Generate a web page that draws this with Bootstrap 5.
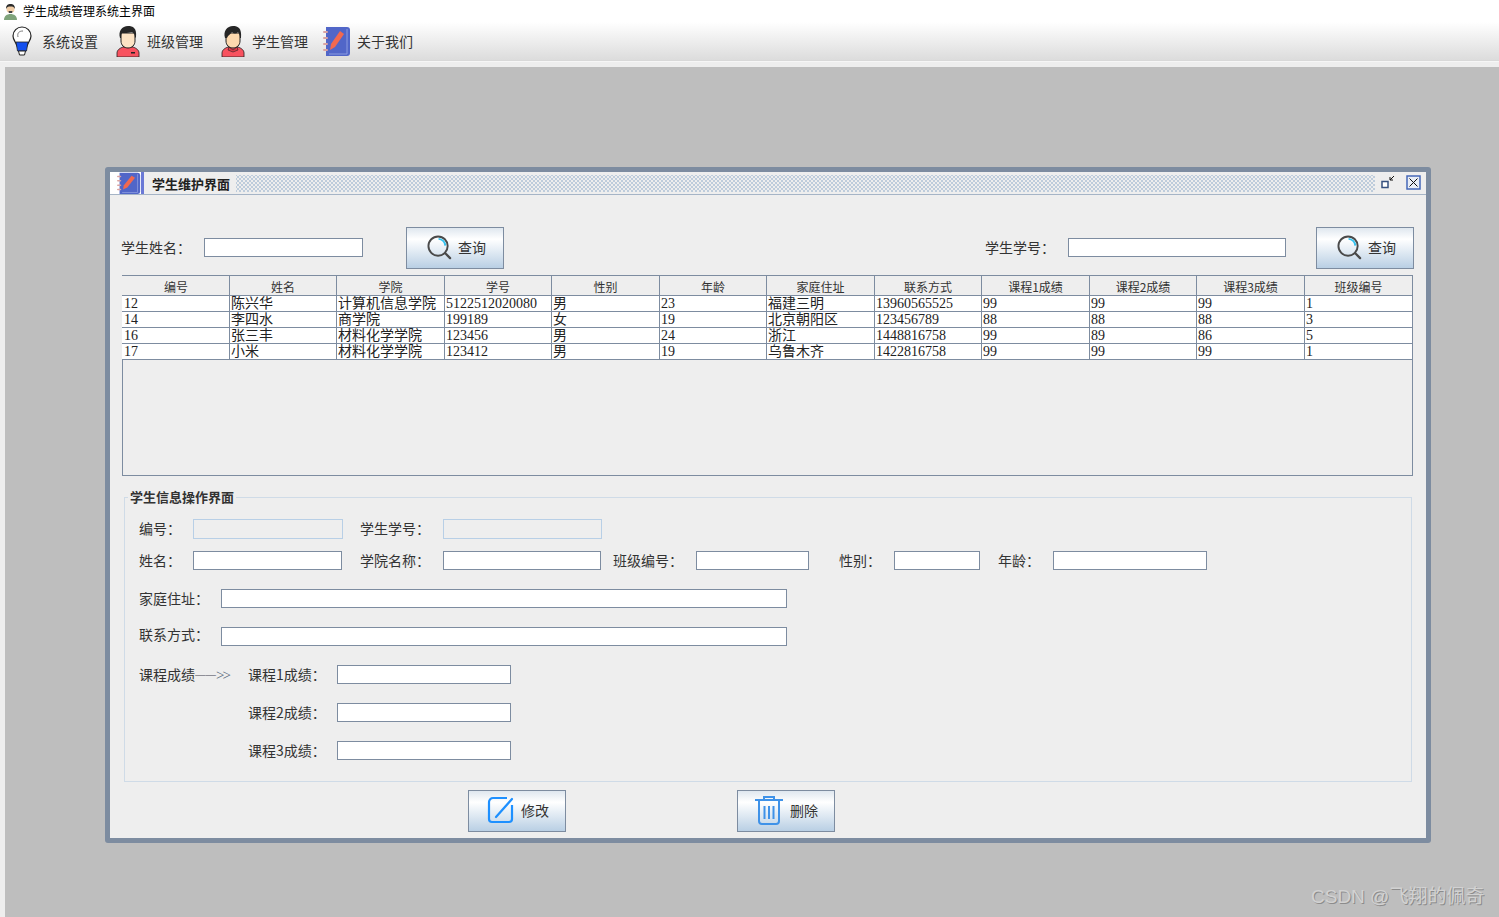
<!DOCTYPE html>
<html lang="zh-CN">
<head>
<meta charset="utf-8">
<title>学生成绩管理系统主界面</title>
<link href="https://cdn.jsdelivr.net/npm/bootstrap@5.3.0/dist/css/bootstrap.min.css" rel="stylesheet">
<style>
html,body{height:917px;overflow:hidden}
body{background:#eee;color:#333;font-family:"Liberation Serif","Noto Sans CJK SC",serif;font-size:14px;line-height:1.2}
.ui-cjk{font-family:"Noto Sans CJK SC","Liberation Sans",sans-serif}
.app-title{height:22px;background:#fff;padding-left:3px;gap:5px;font-size:12px;color:#000}
.app-menu{height:38px;background:linear-gradient(#fff,#dcdcdc);border-bottom:0}
.app-sep{height:2px;background:#f6f6f6;border-top:1px solid #d9d9d9}
.menu-item{color:#333;font-size:14px}
.mi-1{margin-left:11px;width:88px;gap:9px}
.mi-2{margin-left:17px;width:88px;gap:7px}
.mi-3{margin-left:17px;width:88px;gap:7px}
.mi-4{margin-left:14px;gap:6px}
.desk{position:relative;margin:5px 0 0 5px;height:850px;background:#bebebe;padding:100px 68px 0 100px}
.iframe-win{width:1326px;height:676px;border:5px solid #7d8ca0;background:#eee;border-radius:3px}
.win-head{height:23px;border-bottom:1px solid #a5b4c6;background:#eee}
.win-icon{width:34px;height:22px;background:#fff;border-right:3px solid #6a79d6;padding-left:7px;flex:none}
.win-title{font-size:13px;font-weight:700;color:#222;margin:1px 6px 0 8px;white-space:nowrap}
.win-dots{height:17px;background-color:#eee;background-image:radial-gradient(circle at center,#bccbdb 0 .7px,transparent 1px),radial-gradient(circle at center,#bccbdb 0 .7px,transparent 1px);background-size:4px 4px;background-position:0 0,2px 2px}
.win-ctl{gap:11px;margin:0 5px 2px 6px}
.win-body{padding:32px 0 0 12px}
.srch-row{height:42px;padding-left:0}
.srch-label{font-size:14px;color:#333;margin-bottom:2px}
.sl-a{width:83px;margin-left:-1px}
.sl-b{width:83px;margin-left:481px}
.fld{display:block;height:19px;padding:0;border:1px solid #7d8ca0;border-right-color:#7d8ca0;border-radius:0;background:#fff;box-shadow:none;flex:none}
.fld:disabled{background:#eee;border-color:#b8cfe6}
.srch-row .fld{margin-bottom:1px}
.f-159{width:159px}.f-218{width:218px}
.f-150{width:150px;height:20px}.f-159b{width:159px;height:20px}
.f-149{width:149px}.f-158{width:158px}.f-113{width:113px}.f-86{width:86px}.f-154{width:154px}
.f-566{width:566px}.f-174{width:174px}
.act-btn{width:98px;height:42px;padding:0 0 2px;border:1px solid #7d8ca0;border-radius:0;color:#333;font-size:14px;gap:6px;background:linear-gradient(#dfe7ef 0,#fff 28%,#b9cfe4 100%)}
.act-btn:hover{border-color:#7d8ca0;color:#333}
.b-s1{margin-left:43px;padding-left:3px}.b-s2{margin-left:30px;padding-left:3px}
.tbl-box{width:1291px;height:201px;margin-top:6px;border:1px solid #7d8ca0;background:#eee}
.tbl-box .table{table-layout:fixed;width:1291px;margin:0 0 0 -1px;border-collapse:separate;border-spacing:0;--bs-table-bg:transparent;color:#000}
.tbl-box th,.tbl-box td{padding:0 1px;border:0;border-right:1px solid #7d8ca0;border-bottom:1px solid #7d8ca0;white-space:nowrap;box-shadow:none}
.tbl-box th:first-child,.tbl-box td:first-child{padding-left:2px}
.tbl-box th:nth-child(odd){width:108px}
.tbl-box th:nth-child(even){width:107px}
.tbl-box th:last-child{width:108px}
.tbl-box th{height:20px;background:#eee;color:#333;font-weight:400;font-size:12px;text-align:center;vertical-align:bottom;line-height:14px;padding-bottom:1px}
.tbl-box td{height:16px;background:#fff;font-family:"Liberation Serif","Noto Sans CJK SC",serif;font-size:14px;line-height:14px;vertical-align:middle;color:#222}
.grp{position:relative;width:1288px;height:285px;margin:21px 0 0 2px;border:1px solid #cfdbe7;padding:21px 0 0 14px}
.grp-title{position:absolute;left:3px;top:-9px;background:#eee;padding:0 2px;font-size:13px;font-weight:700;color:#333;line-height:16px}
.gr{height:19px;color:#333}
.gr-first{height:20px}
.gr-first label{margin-bottom:2px}
.gr label{flex:none;font-size:14px}
.m12{margin-top:12px}.m19{margin-top:19px}
.lb-up{margin-bottom:4px}
.l54{width:54px}.l82{width:82px}.l82m{width:83px;margin-left:17px}.l82r{width:83px;margin-left:18px}.l82n{width:83px;margin-left:12px}
.l54p{width:55px;margin-left:30px}.l54q{width:55px;margin-left:18px}.l109{width:109px}.l89{width:89px}.l89i{width:89px;margin-left:109px}
.arrow-line{color:#445;font-size:10.500px}
.arrow-head{color:#567;font-family:"Liberation Serif",serif;font-size:15px;letter-spacing:-2px}
.btn-row{margin-top:8px}
.b-m{margin-left:346px;padding-left:2px}.b-d{margin-left:171px}
.wm{position:absolute;left:1306px;top:817px;font-size:19px;line-height:26px;color:#d2d2d2;text-shadow:1px 1px 0 #8c8c8c;white-space:nowrap;font-family:"Liberation Sans","Noto Sans CJK SC",sans-serif}
</style>
</head>
<body>
<svg width="0" height="0" class="d-block position-absolute">
 <defs>
  <symbol id="i-note" viewBox="0 0 28 30" preserveAspectRatio="none">
   <path d="M3 1h21a3 3 0 0 1 3 3v23a3 3 0 0 1-3 3H3z" fill="#5166c8"/>
   <path d="M24 3v25H6" fill="none" stroke="#8c9be0" stroke-width="1"/>
   <path d="M17 5l4 3-9 13-5 3 1-6z" fill="#f2694f"/>
   <g fill="#d9a3a3"><rect x="0" y="5" width="5" height="2" rx="1"/><rect x="0" y="11" width="5" height="2" rx="1"/><rect x="0" y="17" width="5" height="2" rx="1"/><rect x="0" y="23" width="5" height="2" rx="1"/></g>
  </symbol>
  <symbol id="i-lens" viewBox="0 0 26 26">
   <circle cx="11.5" cy="11.5" r="10" fill="none" stroke="#4a4a4a" stroke-width="2"/>
   <path d="M12 4a7.500 7.500 0 0 1 7 7" fill="none" stroke="#35c3f0" stroke-width="2"/>
   <path d="M19 19l5 5" stroke="#4a4a4a" stroke-width="2.400" stroke-linecap="round"/>
  </symbol>
 </defs>
</svg>

<div class="app-title d-flex align-items-center ui-cjk">
 <svg width="15" height="17" viewBox="0 0 15 17"><path d="M1 17c0-4 3-6 6.500-6s6.500 2 6.500 6z" fill="#7fa37a"/><circle cx="7.500" cy="6" r="4" fill="#f1cda6"/><path d="M3 6c0-4 2-5 4.500-5S12 2 12 6c-1-2-2-2.500-4.500-2.500S4 4 3 6z" fill="#2b2b2b"/><path d="M5.500 8h4l-.5 2h-3z" fill="#444"/></svg>
 <span>学生成绩管理系统主界面</span>
</div>
<nav class="app-menu d-flex align-items-center ui-cjk">
 <div class="menu-item mi-1 d-flex align-items-center">
  <svg width="22" height="30" viewBox="0 0 22 30"><path d="M11 1a9 9 0 0 0-9 9c0 4 3 6 4 10h10c1-4 4-6 4-10a9 9 0 0 0-9-9z" fill="#fff" stroke="#222" stroke-width="1.200"/><path d="M7 11c-1-4 1-6 5-6" fill="none" stroke="#777" stroke-width="1"/><path d="M5 16h12l-1.500 9h-9z" fill="#1450ee" stroke="#222" stroke-width=".8"/><path d="M7.500 25h7l-1 4h-5z" fill="#fff" stroke="#222"/></svg>
  <span>系统设置</span>
 </div>
 <div class="menu-item mi-2 d-flex align-items-center">
  <svg width="24" height="32" viewBox="0 0 24 32"><path d="M1 32v-4c0-3 3-5 6-6h10c3 1 6 3 6 6v4z" fill="#f8525f" stroke="#222" stroke-width=".8"/><rect x="15" y="27" width="4" height="1.500" fill="#222"/><path d="M5 8h14v8c0 4-3 7-7 7s-7-3-7-7z" fill="#fde3c4" stroke="#222"/><path d="M4 13C2 6 6 1 12 1c5 0 9 2 8 11l-1 1c0-3-1-5-3-6-3 1-8 1-10 1-1 1-1 3-1 5z" fill="#262626"/></svg>
  <span>班级管理</span>
 </div>
 <div class="menu-item mi-3 d-flex align-items-center">
  <svg width="24" height="32" viewBox="0 0 24 32"><path d="M1 32v-4c0-3 3-5 6-6h10c3 1 6 3 6 6v4z" fill="#f8525f" stroke="#222" stroke-width=".8"/><path d="M8 22l4 3 4-3 1 3-5 2-5-2z" fill="#e23b48" stroke="#222" stroke-width=".6"/><path d="M5 8h14v8c0 4-3 7-7 7s-7-3-7-7z" fill="#fdd9ae" stroke="#222"/><path d="M4 13C2 6 6 1 12 1c5 0 9 2 8 12h-1c0-3-1-4-2-6-2 2-4 2-6 0-1 2-4 3-5 6z" fill="#262626"/></svg>
  <span>学生管理</span>
 </div>
 <div class="menu-item mi-4 d-flex align-items-center">
  <svg width="28" height="30"><use href="#i-note"/></svg>
  <span>关于我们</span>
 </div>
</nav>
<div class="app-sep"></div>

<main class="desk ui-cjk">
 <section class="iframe-win">
  <header class="win-head d-flex align-items-center">
   <div class="win-icon d-flex align-items-center"><svg width="24" height="22"><use href="#i-note"/></svg></div>
   <div class="win-title">学生维护界面</div>
   <div class="win-dots flex-grow-1"></div>
   <div class="win-ctl d-flex align-items-center">
    <svg width="14" height="14" viewBox="0 0 14 14"><rect x="1" y="6.500" width="6" height="6" fill="#fff" stroke="#36507f" stroke-width="1.500"/><path d="M13 1L9 5M9 2v3h3" fill="none" stroke="#111"/></svg>
    <svg width="15" height="15" viewBox="0 0 15 15"><rect x="1" y="1" width="13" height="13" fill="#e9eef6" stroke="#4668b8" stroke-width="1.500"/><path d="M3.500 3.500l8 8M11.500 3.500l-8 8" stroke="#111"/></svg>
   </div>
  </header>
  <div class="win-body">
   <div class="srch-row d-flex align-items-center">
    <label class="srch-label sl-a">学生姓名：</label>
    <input class="form-control fld f-159" type="text">
    <button class="btn act-btn b-s1 d-flex align-items-center justify-content-center" type="button"><svg width="25" height="25"><use href="#i-lens"/></svg><span>查询</span></button>
    <label class="srch-label sl-b">学生学号：</label>
    <input class="form-control fld f-218" type="text">
    <button class="btn act-btn b-s2 d-flex align-items-center justify-content-center" type="button"><svg width="25" height="25"><use href="#i-lens"/></svg><span>查询</span></button>
   </div>
   <div class="tbl-box">
    <table class="table">
     <thead><tr><th>编号</th><th>姓名</th><th>学院</th><th>学号</th><th>性别</th><th>年龄</th><th>家庭住址</th><th>联系方式</th><th>课程1成绩</th><th>课程2成绩</th><th>课程3成绩</th><th>班级编号</th></tr></thead>
     <tbody>
      <tr><td>12</td><td>陈兴华</td><td>计算机信息学院</td><td>5122512020080</td><td>男</td><td>23</td><td>福建三明</td><td>13960565525</td><td>99</td><td>99</td><td>99</td><td>1</td></tr>
      <tr><td>14</td><td>李四水</td><td>商学院</td><td>199189</td><td>女</td><td>19</td><td>北京朝阳区</td><td>123456789</td><td>88</td><td>88</td><td>88</td><td>3</td></tr>
      <tr><td>16</td><td>张三丰</td><td>材料化学学院</td><td>123456</td><td>男</td><td>24</td><td>浙江</td><td>1448816758</td><td>99</td><td>89</td><td>86</td><td>5</td></tr>
      <tr><td>17</td><td>小米</td><td>材料化学学院</td><td>123412</td><td>男</td><td>19</td><td>乌鲁木齐</td><td>1422816758</td><td>99</td><td>99</td><td>99</td><td>1</td></tr>
     </tbody>
    </table>
   </div>
   <div class="grp">
    <div class="grp-title">学生信息操作界面</div>
    <div class="gr gr-first d-flex align-items-center">
     <label class="l54">编号：</label><input class="form-control fld f-150" type="text" disabled>
     <label class="l82m">学生学号：</label><input class="form-control fld f-159b" type="text" disabled>
    </div>
    <div class="gr m12 d-flex align-items-center">
     <label class="l54">姓名：</label><input class="form-control fld f-149" type="text">
     <label class="l82r">学院名称：</label><input class="form-control fld f-158" type="text">
     <label class="l82n">班级编号：</label><input class="form-control fld f-113" type="text">
     <label class="l54p">性别：</label><input class="form-control fld f-86" type="text">
     <label class="l54q">年龄：</label><input class="form-control fld f-154" type="text">
    </div>
    <div class="gr m19 d-flex align-items-center">
     <label class="l82">家庭住址：</label><input class="form-control fld f-566" type="text">
    </div>
    <div class="gr m19 d-flex align-items-center">
     <label class="l82 lb-up">联系方式：</label><input class="form-control fld f-566" type="text">
    </div>
    <div class="gr m19 d-flex align-items-center">
     <label class="l109">课程成绩<span class="arrow-line">──</span><span class="arrow-head">&gt;&gt;</span></label>
     <label class="l89">课程1成绩：</label><input class="form-control fld f-174" type="text">
    </div>
    <div class="gr m19 d-flex align-items-center">
     <label class="l89i">课程2成绩：</label><input class="form-control fld f-174" type="text">
    </div>
    <div class="gr m19 d-flex align-items-center">
     <label class="l89i">课程3成绩：</label><input class="form-control fld f-174" type="text">
    </div>
   </div>
   <div class="btn-row d-flex">
    <button class="btn act-btn b-m d-flex align-items-center justify-content-center" type="button">
     <svg width="28" height="28" viewBox="0 0 28 28"><path d="M20 2H6a4 4 0 0 0-4 4v17a3 3 0 0 0 3 3h17a3 3 0 0 0 3-3V9" fill="none" stroke="#1e90ff" stroke-width="2.200"/><path d="M25 3L9 21" stroke="#1e90ff" stroke-width="2.200" stroke-linecap="round"/></svg><span>修改</span>
    </button>
    <button class="btn act-btn b-d d-flex align-items-center justify-content-center" type="button">
     <svg width="30" height="30" viewBox="0 0 30 30"><path d="M1 5h28" stroke="#3f92e8" stroke-width="2"/><path d="M10 5V2h10v3" fill="none" stroke="#3f92e8" stroke-width="2"/><path d="M5 6v20a3 3 0 0 0 3 3h14a3 3 0 0 0 3-3V6" fill="none" stroke="#3f92e8" stroke-width="2"/><path d="M10.500 11v13M15 11v13M19.500 11v13" stroke="#3f92e8" stroke-width="2"/></svg><span>删除</span>
    </button>
   </div>
  </div>
 </section>
 <div class="wm">CSDN @飞翔的佩奇</div>
</main>
<script src="https://cdn.jsdelivr.net/npm/bootstrap@5.3.0/dist/js/bootstrap.bundle.min.js"></script>
</body>
</html>
